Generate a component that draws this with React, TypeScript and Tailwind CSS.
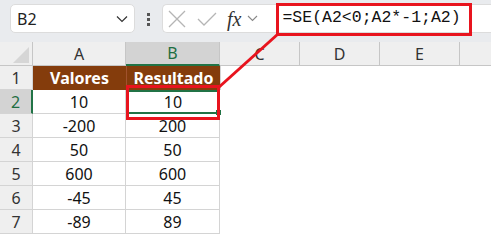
import React from "react";

const rows: [number, string, string][] = [
  [2, "10", "10"],
  [3, "-200", "200"],
  [4, "50", "50"],
  [5, "600", "600"],
  [6, "-45", "45"],
  [7, "-89", "89"],
];

const ui = { fontFamily: '"Noto Sans", "Open Sans", sans-serif' };

export default function App() {
  return (
    <div className="relative w-[491px] h-[241px] overflow-hidden bg-white" style={ui}>
      {/* formula bar */}
      <div className="flex h-[42px] items-start bg-[#e9ebee] pt-[4px]">
        <div className="ml-[10px] flex h-[29px] w-[125px] items-center justify-between rounded-[5px] border border-[#dcdcdc] bg-white pl-[6px] pr-[6px]">
          <span className="text-[16px] text-[#222]">B2</span>
          <svg width="12" height="8" viewBox="0 0 12 8">
            <path d="M1 1.5 L6 6.5 L11 1.5" fill="none" stroke="#333" strokeWidth="1.2" />
          </svg>
        </div>
        <div className="ml-[12px] mt-[9px] flex flex-col gap-[2px]">
          <div className="h-[3px] w-[3px] bg-[#555]" />
          <div className="h-[3px] w-[3px] bg-[#555]" />
          <div className="h-[3px] w-[3px] bg-[#555]" />
        </div>
        <div className="ml-[12px] flex h-[29px] flex-1 items-center rounded-l-[5px] border border-r-0 border-[#dcdcdc] bg-white">
          <svg className="ml-[4px]" width="20" height="20" viewBox="0 0 20 20">
            <path d="M2 2 L18 18 M18 2 L2 18" stroke="#b5b5b5" strokeWidth="1.3" />
          </svg>
          <svg className="ml-[10px]" width="20" height="16" viewBox="0 0 20 16">
            <path d="M1 8 L7 14 L19 2" fill="none" stroke="#b5b5b5" strokeWidth="1.3" />
          </svg>
          <span
            className="ml-[10px] text-[20px] italic leading-none text-[#333]"
            style={{ fontFamily: '"Liberation Serif", serif' }}
          >
            fx
          </span>
          <svg className="ml-[6px]" width="11" height="7" viewBox="0 0 11 7">
            <path d="M1 1 L5.5 5.5 L10 1" fill="none" stroke="#888" strokeWidth="1.1" />
          </svg>
          <span
            className="ml-[24px] text-[16.5px] text-[#111]"
            style={{ fontFamily: '"Liberation Mono", monospace' }}
          >
            =SE(A2&lt;0;A2*-1;A2)
          </span>
        </div>
      </div>

      {/* sheet */}
      <div className="grid grid-cols-[33px_93px_94px_80px_80px_80px_31px] grid-rows-[24px_repeat(7,24px)] text-[16px]">
        {/* column headers */}
        <div className="relative border-b border-r border-[#c6c6c6] bg-[#efefef]">
          <svg className="absolute left-[13px] top-[5px]" width="16" height="16" viewBox="0 0 16 16">
            <path d="M16 0 L16 16 L0 16 Z" fill="#d6d6d6" />
          </svg>
        </div>
        <div className="flex items-center justify-center border-b border-r border-[#c6c6c6] bg-[#efefef] text-[#333]">A</div>
        <div className="flex items-center justify-center border-b-2 border-r border-b-[#217346] border-r-[#c6c6c6] bg-[#d3d3d3] text-[#1e6e42]">B</div>
        <div className="flex items-center justify-center border-b border-r border-[#c6c6c6] bg-[#efefef] text-[#333]">C</div>
        <div className="flex items-center justify-center border-b border-r border-[#c6c6c6] bg-[#efefef] text-[#333]">D</div>
        <div className="flex items-center justify-center border-b border-r border-[#c6c6c6] bg-[#efefef] text-[#333]">E</div>
        <div className="border-b border-[#c6c6c6] bg-[#efefef]" />

        {/* row 1 */}
        <div className="flex items-center justify-center border-b border-r border-[#d4d4d4] bg-[#efefef] text-[#333]">1</div>
        <div className="flex items-center justify-center bg-[#843c0c] font-bold text-white">Valores</div>
        <div className="flex items-center justify-center border-l border-[#a0522d] bg-[#843c0c] font-bold text-white">Resultado</div>
        <div className="col-span-4 border-l border-[#d4d4d4]" />

        {rows.map(([n, a, b]) => (
          <React.Fragment key={n}>
            <div
              className={
                n === 2
                  ? "flex items-center justify-center border-b border-r-2 border-b-[#d4d4d4] border-r-[#217346] bg-[#d3d3d3] text-[#1e6e42]"
                  : "flex items-center justify-center border-b border-r border-[#d4d4d4] bg-[#efefef] text-[#333]"
              }
            >
              {n}
            </div>
            <div className="flex items-center justify-center border-b border-r border-[#d4d4d4] text-[#111]">{a}</div>
            <div
              className={
                n === 2
                  ? "relative flex items-center justify-center border-2 border-[#217346] text-[#111]"
                  : "flex items-center justify-center border-b border-r border-[#d4d4d4] text-[#111]"
              }
            >
              {b}
              {n === 2 && <div className="absolute -bottom-[3px] -right-[3px] h-[5px] w-[5px] bg-[#217346]" />}
            </div>
            <div className="col-span-4" />
          </React.Fragment>
        ))}
      </div>

      {/* callout */}
      <div className="pointer-events-none absolute left-[126px] top-[85px] h-[35px] w-[94px] border-[3px] border-[#e8141e]" />
      <div className="pointer-events-none absolute left-[276px] top-[3px] h-[33px] w-[196px] border-[3px] border-[#e8141e]" />
      <svg className="pointer-events-none absolute left-0 top-0" width="491" height="241">
        <line x1="218" y1="88" x2="278" y2="34" stroke="#e8141e" strokeWidth="3" />
      </svg>
    </div>
  );
}
